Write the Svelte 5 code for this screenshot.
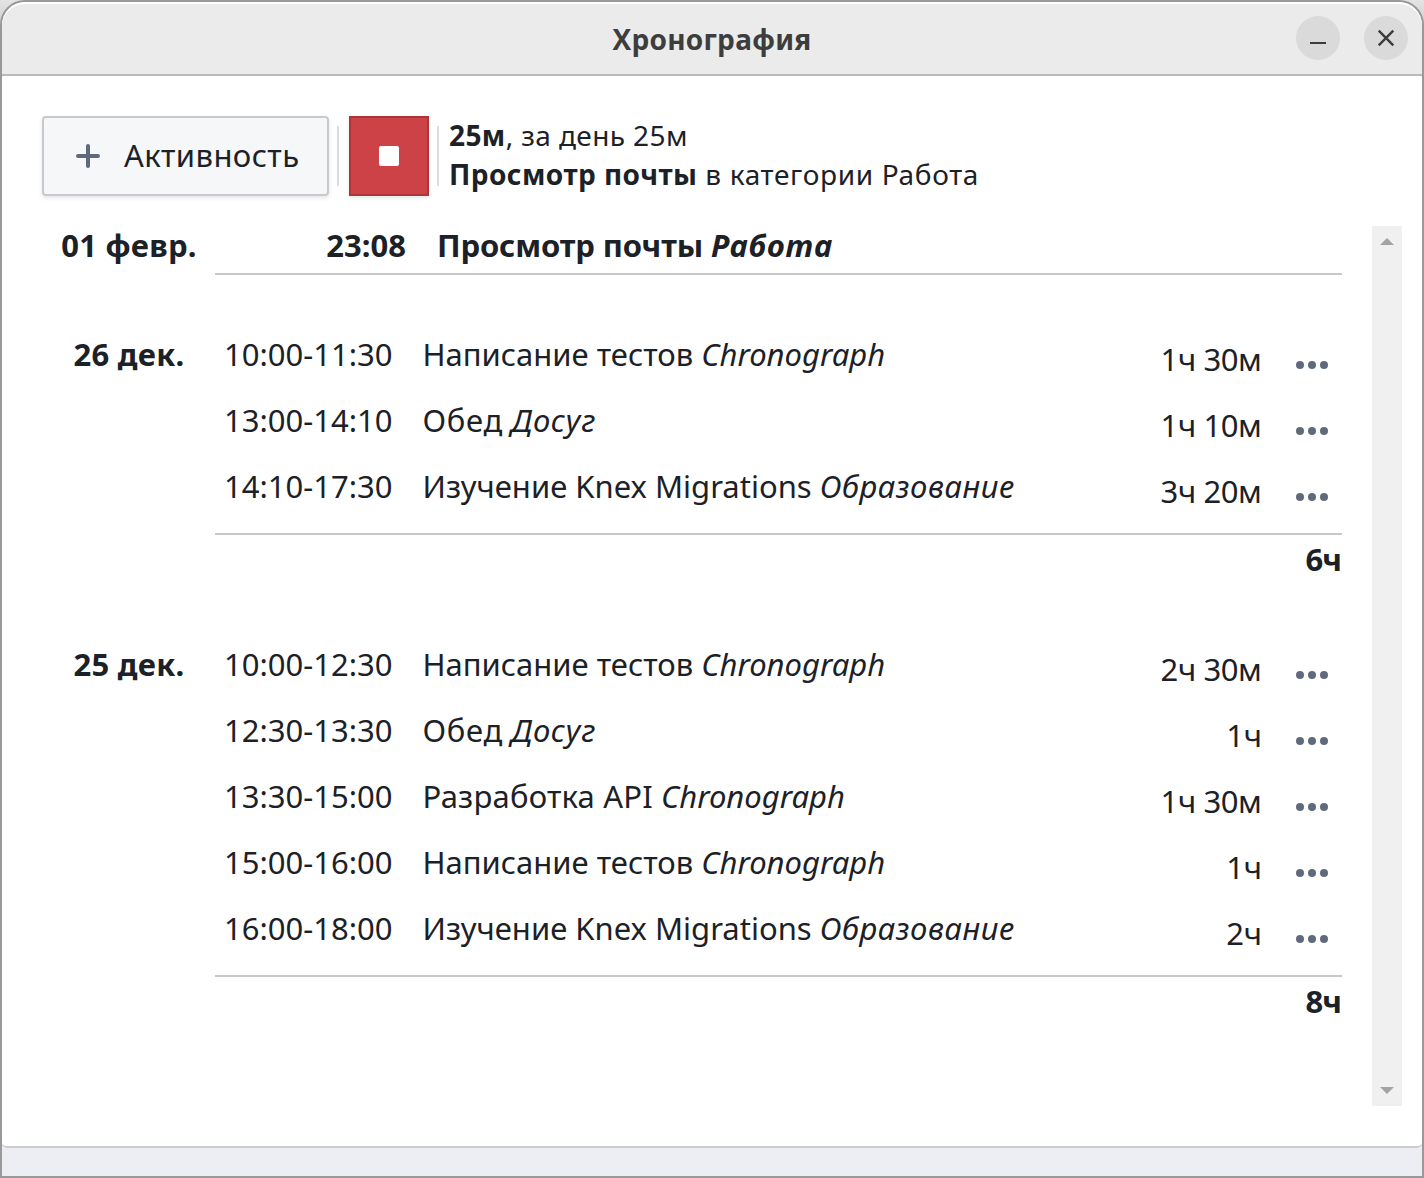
<script>
  const days = [
    {
      date: '26 дек.',
      total: '6ч',
      rows: [
        ['10:00-11:30', 'Написание тестов', 'Chronograph', '1ч 30м'],
        ['13:00-14:10', 'Обед', 'Досуг', '1ч 10м'],
        ['14:10-17:30', 'Изучение Knex Migrations', 'Образование', '3ч 20м'],
      ],
    },
    {
      date: '25 дек.',
      total: '8ч',
      rows: [
        ['10:00-12:30', 'Написание тестов', 'Chronograph', '2ч 30м'],
        ['12:30-13:30', 'Обед', 'Досуг', '1ч'],
        ['13:30-15:00', 'Разработка API', 'Chronograph', '1ч 30м'],
        ['15:00-16:00', 'Написание тестов', 'Chronograph', '1ч'],
        ['16:00-18:00', 'Изучение Knex Migrations', 'Образование', '2ч'],
      ],
    },
  ];

  // Short titles and Cyrillic italics get slightly looser tracking.
  const isCyrillic = (text) => /[а-я]/i.test(text);
</script>

<div class="desktop">
  <div class="window">
    <header>
      <span class="spacer"></span>
      <h1>Хронография</h1>
      <div class="controls">
        <button class="round" aria-label="Свернуть">
          <svg width="44" height="44" viewBox="0 0 44 44"><path d="M14 27h16" stroke="#3d3d3d" stroke-width="2" /></svg>
        </button>
        <button class="round" aria-label="Закрыть">
          <svg width="44" height="44" viewBox="0 0 44 44"><path d="M14.7 14.7l14.6 14.6M29.3 14.7L14.7 29.3" stroke="#3d3d3d" stroke-width="2.4" /></svg>
        </button>
      </div>
    </header>

    <main>
      <div class="toolbar">
        <button class="add">
          <svg width="24" height="24" viewBox="0 0 24 24"><path d="M12 2v20M2 12h20" stroke="#5f6b7c" stroke-width="4" stroke-linecap="round" /></svg>
          <span>Активность</span>
        </button>
        <i class="divider"></i>
        <button class="stop" aria-label="Остановить"><span></span></button>
        <i class="divider"></i>
        <div class="current">
          <div class="elapsed"><b>25м</b>, за день 25м</div>
          <div class="task"><b>Просмотр почты</b> в категории Работа</div>
        </div>
      </div>

      <div class="scroller">
        <div class="list">
          <section class="active">
            <div class="date">01 февр.</div>
            <div class="entries">
              <span class="start">23:08</span>
              <span class="what">Просмотр почты <em>Работа</em></span>
            </div>
          </section>
          {#each days as day}
            <section class="day">
              <div class="date">{day.date}</div>
              <div class="body">
                <div class="rows">
                  {#each day.rows as [time, name, category, duration]}
                    <div class="row">
                      <span class="time">{time}</span>
                      <span class="name"><span class:short={name.length < 6} class:medium={name.length === 14}>{name}</span> <em class:loose={isCyrillic(category)}>{category}</em></span>
                      <span class="duration">{duration}</span>
                      <svg class="more" width="32" height="8" viewBox="0 0 32 8" fill="#5f6b7c">
                        <circle cx="4" cy="4" r="4" /><circle cx="16" cy="4" r="4" /><circle cx="28" cy="4" r="4" />
                      </svg>
                    </div>
                  {/each}
                </div>
                <div class="total">{day.total}</div>
              </div>
            </section>
          {/each}
        </div>
        <div class="scrollbar">
          <svg width="14" height="7" viewBox="0 0 14 7"><path d="M0 7L7 0l7 7z" fill="#a3a3a3" /></svg>
          <svg width="14" height="7" viewBox="0 0 14 7"><path d="M0 0h14L7 7z" fill="#a3a3a3" /></svg>
        </div>
      </div>
    </main>
    <footer></footer>
  </div>
</div>

<style>
  * {
    box-sizing: border-box;
  }
  .desktop {
    width: 1424px;
    height: 1178px;
    background: linear-gradient(#e4e4e4, #b0b0b0 60px, #a0a0a0);
    overflow: hidden;
    font-family: 'Noto Sans', 'Open Sans', sans-serif;
    color: #1c2127;
  }
  .window {
    display: flex;
    flex-direction: column;
    height: 1178px;
    border: 2px solid #999;
    border-radius: 25px 25px 0 0;
    background: #edeef3;
    overflow: hidden;
  }
  header {
    display: grid;
    grid-template-columns: 1fr auto 1fr;
    align-items: center;
    height: 74px;
    background: #ebebeb;
    border-bottom: 2px solid #bababa;
    border-radius: 23px 23px 0 0;
    box-shadow: inset 0 2px #fff;
  }
  h1 {
    margin: 0;
    padding-top: 1px;
    font-size: 28px;
    line-height: 40px;
    letter-spacing: 0.3px;
    font-weight: 700;
    color: #3d3d3d;
  }
  .controls {
    display: flex;
    justify-content: flex-end;
    gap: 24px;
    padding-right: 14px;
  }
  button {
    font: inherit;
    color: inherit;
    padding: 0;
    border: 0;
  }
  .round {
    width: 44px;
    height: 44px;
    border-radius: 50%;
    background: #dadada;
  }
  .round svg {
    display: block;
  }
  main {
    height: 1072px;
    padding: 40px 20px 40px 40px;
    background: #fff;
    border-bottom: 2px solid #cbccd0;
    border-radius: 3px 3px 5px 5px;
  }
  .toolbar {
    display: flex;
    align-items: center;
    height: 80px;
  }
  .add {
    display: flex;
    align-items: center;
    gap: 24px;
    width: 287px;
    height: 80px;
    padding-left: 32px;
    background: #f6f7f9;
    border: 2px solid #c8c9cc;
    border-radius: 4px;
    box-shadow: 0 2px 4px rgba(17, 20, 24, 0.1);
    font-size: 31px;
    letter-spacing: 0.4px;
    white-space: nowrap;
  }
  .add span {
    padding-bottom: 2px;
  }
  .divider {
    width: 2px;
    height: 60px;
    margin: 0 10px 0 8px;
    background: #dcdcdd;
  }
  .stop {
    display: grid;
    place-items: center;
    width: 80px;
    height: 80px;
    background: #cd4246;
    border: 2px solid #ac3539;
    box-shadow: 0 2px 4px rgba(17, 20, 24, 0.1);
  }
  .stop span {
    width: 20px;
    height: 20px;
    border-radius: 2px;
    background: #fff;
  }
  .current {
    padding-bottom: 2px;
    font-size: 28px;
    line-height: 39px;
    white-space: nowrap;
  }
  .elapsed {
    letter-spacing: 0.4px;
  }
  .task {
    letter-spacing: 0.65px;
  }
  .task b {
    letter-spacing: 0.45px;
  }
  .scroller {
    display: flex;
    justify-content: space-between;
    height: 880px;
    margin-top: 30px;
  }
  .list {
    width: 1300px;
    font-size: 31px;
    white-space: nowrap;
  }
  section {
    display: grid;
    grid-template-columns: 173px 1127px;
  }
  .date {
    padding-left: 1px;
    font-weight: 700;
    text-align: center;
    letter-spacing: 0.25px;
  }
  .active {
    font-weight: 700;
    line-height: 38px;
    margin-bottom: 47px;
  }
  .active .entries {
    display: flex;
    gap: 31px;
    padding: 0 0 9px;
    border-bottom: 2px solid #c8c8c8;
  }
  .start {
    width: 191px;
    text-align: right;
  }
  .what {
    letter-spacing: -0.15px;
  }
  .what em {
    letter-spacing: 0.9px;
  }
  .day {
    line-height: 64px;
    margin-bottom: 45px;
  }
  .rows {
    padding-bottom: 13px;
    border-bottom: 2px solid #c8c8c8;
  }
  .row {
    display: flex;
    align-items: flex-start;
    height: 66px;
    padding: 0 14px 0 9px;
  }
  .time {
    width: 198.5px;
  }
  .name {
    flex: 1;
  }
  .short {
    letter-spacing: 0.7px;
  }
  .medium {
    letter-spacing: 0.2px;
  }
  .loose {
    letter-spacing: 0.5px;
  }
  .duration {
    line-height: 74px;
    letter-spacing: -0.4px;
  }
  .more {
    margin: 39px 0 0 34.5px;
  }
  .total {
    height: 52px;
    padding-right: 1px;
    font-weight: 700;
    line-height: 48px;
    text-align: right;
    letter-spacing: -1px;
  }
  .scrollbar {
    display: flex;
    flex-direction: column;
    justify-content: space-between;
    align-items: center;
    width: 30px;
    padding: 12px 0;
    background: #f0f0f0;
  }
  footer {
    flex: 1;
  }
</style>
